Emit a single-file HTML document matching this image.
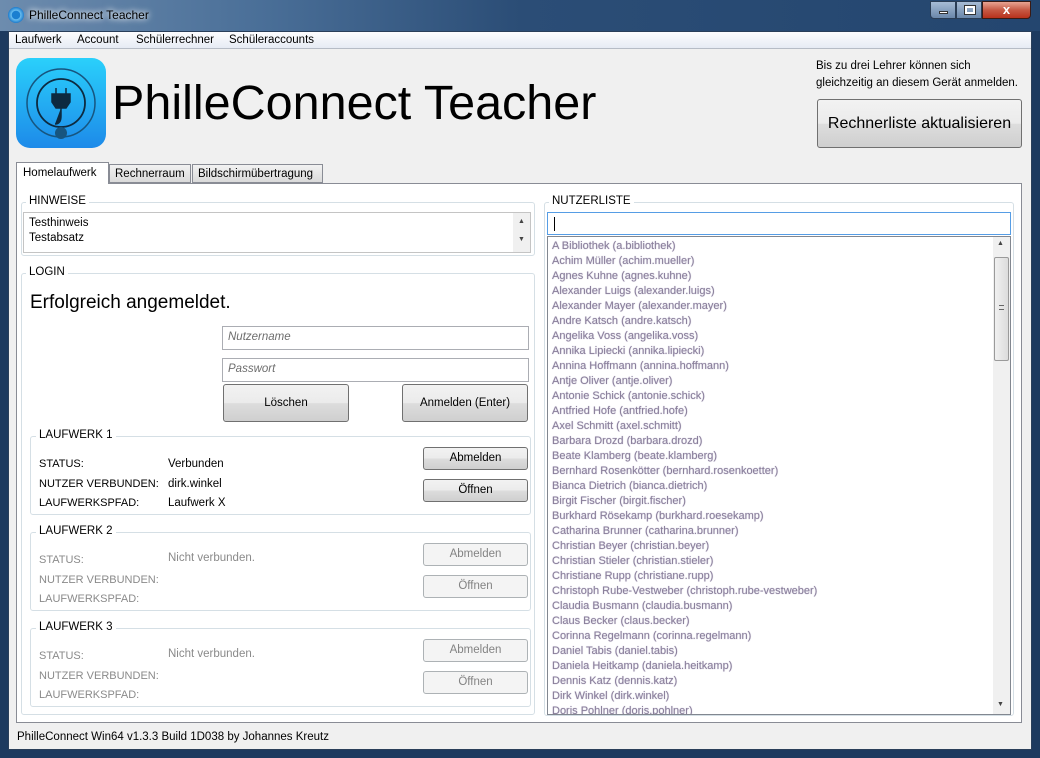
<!DOCTYPE html>
<html><head><meta charset="utf-8"><style>
*{box-sizing:border-box;margin:0;padding:0}
body{width:1040px;height:758px;overflow:hidden;background:#1d3a5f;font-family:"Liberation Sans",sans-serif;font-size:11.5px;color:#000;position:relative}
.a{position:absolute}
.title{left:0;top:0;width:1040px;height:31px;background:linear-gradient(90deg,#6d8cae 0,#4a6f98 25%,#2b4d76 50%,#24466f 100%)}
.client{left:8px;top:31px;width:1024px;height:719px;background:#f0f0f0;border:1px solid #2a3f5a}
.menu{left:9px;top:32px;width:1022px;height:17px;background:linear-gradient(#fdfdfe,#e6ebf4);border-bottom:1px solid #b6bcc6}
.menu span{position:absolute;top:2px;font-size:11.5px}
.btn{border:1px solid #707070;border-radius:3px;background:linear-gradient(#f2f2f2 0,#ebebeb 50%,#dddddd 51%,#cfcfcf 100%);text-align:center}
.dis{border:1px solid #adb2b5;border-radius:3px;background:#f4f4f4;color:#838383;text-align:center}
.grp{border:1px solid #d5dfe5;border-radius:3px}
.lg{background:#fff;padding:0 3px;font-size:11.5px}
.inp{border:1px solid #abadb3;background:#fff;font-style:italic;color:#6d6d6d;padding:4px 5px}
.lst div{height:15px;line-height:15px;color:#8a7f9a;white-space:nowrap;font-size:11px;text-shadow:0 0 1px #b0a8c8}
.g{color:#8a8a8a}
.lab{font-size:11px}
</style></head><body>
<div class="a title"></div>
<div class="a" style="left:8px;top:7px;width:16px;height:16px;border-radius:50%;background:radial-gradient(#1b7fd0 35%,#6cc0f0 40%,#1e7ccc 70%)"></div>
<div class="a" style="left:29px;top:8px;font-size:12px;color:#000;text-shadow:0 0 8px #fff,0 0 6px #fff">PhilleConnect Teacher</div>
<div class="a" style="left:930px;top:1px;width:26px;height:18px;border:1px solid #2a3d55;border-radius:0 0 0 4px;background:linear-gradient(#a7bcd5,#6a87aa)"><div class="a" style="left:8px;top:9px;width:9px;height:3px;background:#fff;border:1px solid #333"></div></div>
<div class="a" style="left:956px;top:1px;width:26px;height:18px;border:1px solid #2a3d55;background:linear-gradient(#a7bcd5,#6a87aa)"><div class="a" style="left:8px;top:4px;width:10px;height:8px;border:2px solid #fff;outline:1px solid #333"></div></div>
<div class="a" style="left:982px;top:1px;width:49px;height:18px;border:1px solid #3a1a14;border-radius:0 0 4px 0;background:linear-gradient(#e8a493,#c75a45 50%,#b8321c);color:#fff;font-weight:bold;text-align:center;font-size:13px;line-height:16px">x</div>
<div class="a client"></div>
<div class="a menu"><span style="left:6px">Laufwerk</span><span style="left:68px">Account</span><span style="left:127px">Schülerrechner</span><span style="left:220px">Schüleraccounts</span></div>
<div class="a" style="left:16px;top:58px;width:90px;height:90px;border-radius:14px;background:linear-gradient(#2ad0fb,#1d8ae9)">
<svg width="90" height="90" viewBox="0 0 90 90"><circle cx="45" cy="45" r="34" fill="none" stroke="#17557f" stroke-width="1.5"/><circle cx="45" cy="45" r="24" fill="none" stroke="#0d2a40" stroke-width="1.8"/><path d="M40 30v6M50 30v6M36 36h18v8l-4 6h-10l-4-6z M45 50v8q0 8 -6 8" fill="#0d2a40" stroke="#0d2a40" stroke-width="1.5"/><circle cx="45" cy="75" r="6" fill="#17557f"/></svg></div>
<div class="a" style="left:112px;top:73px;font-size:48.5px;line-height:60px;font-family:'Liberation Sans',sans-serif">PhilleConnect Teacher</div>
<div class="a" style="left:816px;top:58px;font-size:11.5px;line-height:17px">Bis zu drei Lehrer können sich<br>gleichzeitig an diesem Gerät anmelden.</div>
<div class="a btn" style="left:817px;top:99px;width:205px;height:49px;font-size:16px;line-height:47px">Rechnerliste aktualisieren</div>
<div class="a" style="left:16px;top:183px;width:1006px;height:540px;background:#fff;border:1px solid #898c95"></div>
<div class="a" style="left:16px;top:162px;width:93px;height:22px;background:#fff;border:1px solid #898c95;border-bottom:none;padding:4px 0 0 6px">Homelaufwerk</div>
<div class="a" style="left:109px;top:164px;width:82px;height:19px;background:linear-gradient(#f2f2f2,#dadada);border:1px solid #898c95;padding:3px 0 0 5px">Rechnerraum</div>
<div class="a" style="left:192px;top:164px;width:131px;height:19px;background:linear-gradient(#f2f2f2,#dadada);border:1px solid #898c95;padding:3px 0 0 5px">Bildschirmübertragung</div>
<div class="a grp" style="left:21px;top:202px;width:514px;height:54px"></div>
<div class="a lg" style="left:26px;top:195px">HINWEISE</div>
<div class="a" style="left:23px;top:212px;width:508px;height:41px;border:1px solid #c4c4c4;padding:3px 0 0 5px;line-height:15px">Testhinweis<br>Testabsatz</div>
<div class="a" style="left:513px;top:213px;width:17px;height:39px;background:#f0f0f0;font-size:7px;text-align:center;line-height:18px;color:#444">▲<br>▼</div>
<div class="a grp" style="left:21px;top:273px;width:514px;height:442px"></div>
<div class="a lg" style="left:26px;top:266px">LOGIN</div>
<div class="a" style="left:30px;top:292px;font-size:19px">Erfolgreich angemeldet.</div>
<div class="a inp" style="left:222px;top:326px;width:307px;height:24px">Nutzername</div>
<div class="a inp" style="left:222px;top:358px;width:307px;height:24px">Passwort</div>
<div class="a btn" style="left:223px;top:384px;width:126px;height:38px;line-height:36px">Löschen</div>
<div class="a btn" style="left:402px;top:384px;width:126px;height:38px;line-height:36px">Anmelden (Enter)</div>
<div class="a grp" style="left:30px;top:436px;width:501px;height:79px"></div>
<div class="a lg" style="left:36px;top:429px">LAUFWERK 1</div>
<div class="a lab" style="left:39px;top:455px;line-height:19.5px">STATUS:<br>NUTZER VERBUNDEN:<br>LAUFWERKSPFAD:</div>
<div class="a" style="left:168px;top:455px;line-height:19.5px">Verbunden<br>dirk.winkel<br>Laufwerk X</div>
<div class="a btn" style="left:423px;top:447px;width:105px;height:23px;line-height:21px">Abmelden</div>
<div class="a btn" style="left:423px;top:479px;width:105px;height:23px;line-height:21px">Öffnen</div>
<div class="a grp" style="left:30px;top:532px;width:501px;height:79px"></div>
<div class="a lg" style="left:36px;top:525px">LAUFWERK 2</div>
<div class="a g lab" style="left:39px;top:551px;line-height:19.5px">STATUS:<br>NUTZER VERBUNDEN:<br>LAUFWERKSPFAD:</div>
<div class="a g" style="left:168px;top:552px">Nicht verbunden.</div>
<div class="a dis" style="left:423px;top:543px;width:105px;height:23px;line-height:21px">Abmelden</div>
<div class="a dis" style="left:423px;top:575px;width:105px;height:23px;line-height:21px">Öffnen</div>
<div class="a grp" style="left:30px;top:628px;width:501px;height:79px"></div>
<div class="a lg" style="left:36px;top:621px">LAUFWERK 3</div>
<div class="a g lab" style="left:39px;top:647px;line-height:19.5px">STATUS:<br>NUTZER VERBUNDEN:<br>LAUFWERKSPFAD:</div>
<div class="a g" style="left:168px;top:648px">Nicht verbunden.</div>
<div class="a dis" style="left:423px;top:639px;width:105px;height:23px;line-height:21px">Abmelden</div>
<div class="a dis" style="left:423px;top:671px;width:105px;height:23px;line-height:21px">Öffnen</div>
<div class="a grp" style="left:544px;top:202px;width:470px;height:514px"></div>
<div class="a lg" style="left:549px;top:195px">NUTZERLISTE</div>
<div class="a" style="left:547px;top:212px;width:464px;height:23px;border:1px solid #569de5;background:#fff"><div class="a" style="left:6px;top:4px;width:1px;height:14px;background:#000"></div></div>
<div class="a" style="left:547px;top:236px;width:464px;height:479px;border:1px solid #828790;background:#fff;overflow:hidden">
<div class="a lst" style="left:4px;top:2px">
<div>A Bibliothek (a.bibliothek)</div><div>Achim Müller (achim.mueller)</div><div>Agnes Kuhne (agnes.kuhne)</div><div>Alexander Luigs (alexander.luigs)</div><div>Alexander Mayer (alexander.mayer)</div><div>Andre Katsch (andre.katsch)</div><div>Angelika Voss (angelika.voss)</div><div>Annika Lipiecki (annika.lipiecki)</div><div>Annina Hoffmann (annina.hoffmann)</div><div>Antje Oliver (antje.oliver)</div><div>Antonie Schick (antonie.schick)</div><div>Antfried Hofe (antfried.hofe)</div><div>Axel Schmitt (axel.schmitt)</div><div>Barbara Drozd (barbara.drozd)</div><div>Beate Klamberg (beate.klamberg)</div><div>Bernhard Rosenkötter (bernhard.rosenkoetter)</div><div>Bianca Dietrich (bianca.dietrich)</div><div>Birgit Fischer (birgit.fischer)</div><div>Burkhard Rösekamp (burkhard.roesekamp)</div><div>Catharina Brunner (catharina.brunner)</div><div>Christian Beyer (christian.beyer)</div><div>Christian Stieler (christian.stieler)</div><div>Christiane Rupp (christiane.rupp)</div><div>Christoph Rube-Vestweber (christoph.rube-vestweber)</div><div>Claudia Busmann (claudia.busmann)</div><div>Claus Becker (claus.becker)</div><div>Corinna Regelmann (corinna.regelmann)</div><div>Daniel Tabis (daniel.tabis)</div><div>Daniela Heitkamp (daniela.heitkamp)</div><div>Dennis Katz (dennis.katz)</div><div>Dirk Winkel (dirk.winkel)</div><div>Doris Pohlner (doris.pohlner)</div>
</div>
<div class="a" style="left:445px;top:0;width:17px;height:477px;background:#f0f0f0"></div>
<div class="a" style="left:449px;top:3px;font-size:7px;color:#444">▲</div>
<div class="a" style="left:449px;top:464px;font-size:7px;color:#444">▼</div>
<div class="a" style="left:446px;top:20px;width:15px;height:104px;border:1px solid #9a9a9a;border-radius:2px;background:linear-gradient(90deg,#f0f0f0,#dcdcdc)"></div>
<div class="a" style="left:451px;top:68px;width:5px;height:5px;border-top:1px solid #666;border-bottom:1px solid #666"></div>
</div>
<div class="a" style="left:17px;top:731px">PhilleConnect Win64 v1.3.3 Build 1D038 by Johannes Kreutz</div>
</body></html>
